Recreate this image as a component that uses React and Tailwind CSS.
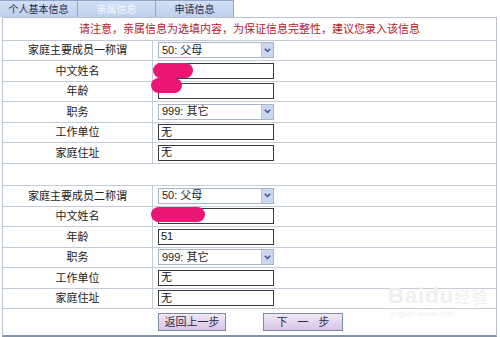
import { useState } from "react";

const font = "font-['Liberation_Sans','Noto_Sans_CJK_SC',sans-serif]";

// one label/value row of the family form
function Row({ label, children }) {
  return (
    <div className="flex h-[20.5px] border-b border-[#c3ccd8]">
      <div className="w-[150px] border-r border-[#c3ccd8] flex items-center justify-center text-[#222]">
        {label}
      </div>
      <div className="flex-1 flex items-center pl-[5px]">{children}</div>
    </div>
  );
}

function TextBox({ value }) {
  return (
    <div className="w-[116px] h-[16px] border border-[#3a3a3a] bg-white flex items-center pl-[2px] text-[#111] leading-none">
      {value}
    </div>
  );
}

function SelectBox({ value }) {
  return (
    <div className="w-[116px] h-[16px] border border-[#a9b5c6] bg-white flex items-center text-[#222] leading-none">
      <span className="flex-1 pl-[3px]">{value}</span>
      <span className="w-[12px] h-full bg-[#c9d8ef] border-l border-[#b8c7de] flex items-center justify-center">
        <svg width="7" height="5" viewBox="0 0 7 5">
          <path d="M0.8 0.8 L3.5 3.6 L6.2 0.8" fill="none" stroke="#35508a" strokeWidth="1.4" />
        </svg>
      </span>
    </div>
  );
}

export default function App() {
  const [tab] = useState(1);
  const tabs = ["个人基本信息", "亲属信息", "申请信息"];

  return (
    <div className={`w-[500px] h-[337px] bg-white relative overflow-hidden text-[11px] ${font}`}>
      {/* TABS */}
      <div className="flex h-[17px]">
        {tabs.map((t, i) => (
          <div
            key={i}
            className={`w-[78px] whitespace-nowrap text-[10px] flex items-center justify-center bg-gradient-to-b from-[#d3e0f4] to-[#bccfec] border-r border-t border-[#8ea6c8] ${
              i === tab ? "text-[#f4f7fc]" : "text-[#1d2a44]"
            }`}
          >
            {t}
          </div>
        ))}
      </div>

      <div className="ml-[2px] w-[495px] border-l border-r border-t border-[#b8c3d3] border-b-2 border-b-[#8794a6]">
        <div className="h-[22.5px] border-b border-[#c3ccd8] flex items-center justify-center text-[#b0222a] whitespace-nowrap">
          请注意，亲属信息为选填内容，为保证信息完整性，建议您录入该信息
        </div>

        <Row label="家庭主要成员一称谓">
          <SelectBox value="50: 父母" />
        </Row>
        <Row label="中文姓名">
          <TextBox value="" />
        </Row>
        <Row label="年龄">
          <TextBox value="" />
        </Row>
        <Row label="职务">
          <SelectBox value="999: 其它" />
        </Row>
        <Row label="工作单位">
          <TextBox value="无" />
        </Row>
        <Row label="家庭住址">
          <TextBox value="无" />
        </Row>

        <div className="h-[22.5px] border-b border-[#c3ccd8]"></div>

        <Row label="家庭主要成员二称谓">
          <SelectBox value="50: 父母" />
        </Row>
        <Row label="中文姓名">
          <TextBox value="" />
        </Row>
        <Row label="年龄">
          <TextBox value="51" />
        </Row>
        <Row label="职务">
          <SelectBox value="999: 其它" />
        </Row>
        <Row label="工作单位">
          <TextBox value="无" />
        </Row>
        <Row label="家庭住址">
          <TextBox value="无" />
        </Row>

        <div className="h-[26px] flex items-center pl-[155px] gap-[37px]">
          <button className="w-[68px] h-[18px] whitespace-nowrap border border-[#7d8aa4] bg-gradient-to-b from-[#f1e6f6] to-[#d6c6e6] text-[#2a2a3a] text-[11px] leading-none">
            返回上一步
          </button>
          <button className="w-[80px] h-[18px] whitespace-nowrap border border-[#7d8aa4] bg-gradient-to-b from-[#f1e6f6] to-[#d6c6e6] text-[#2a2a3a] text-[11px] leading-none tracking-[10px] pl-[10px]">
            下一步
          </button>
        </div>
      </div>

      {/* redaction marks */}
      <div className="absolute left-[153px] top-[63px] w-[40px] h-[15px] rounded-full bg-[#ea1676]"></div>
      <div className="absolute left-[151px] top-[78px] w-[31px] h-[15px] rounded-full bg-[#ea1676]"></div>
      <div className="absolute left-[151px] top-[207px] w-[54px] h-[15px] rounded-full bg-[#ea1676]"></div>

      {/* watermark */}
      <div className="absolute left-[388px] top-[285px] text-[#efefef] leading-none">
        <div className="text-[22px] font-bold tracking-[1px]">
          Baidu<span className="text-[16px] font-normal">经验</span>
        </div>
        <div className="text-[8px] mt-[3px] pl-[2px]">jingyan.baidu.com</div>
      </div>
    </div>
  );
}
